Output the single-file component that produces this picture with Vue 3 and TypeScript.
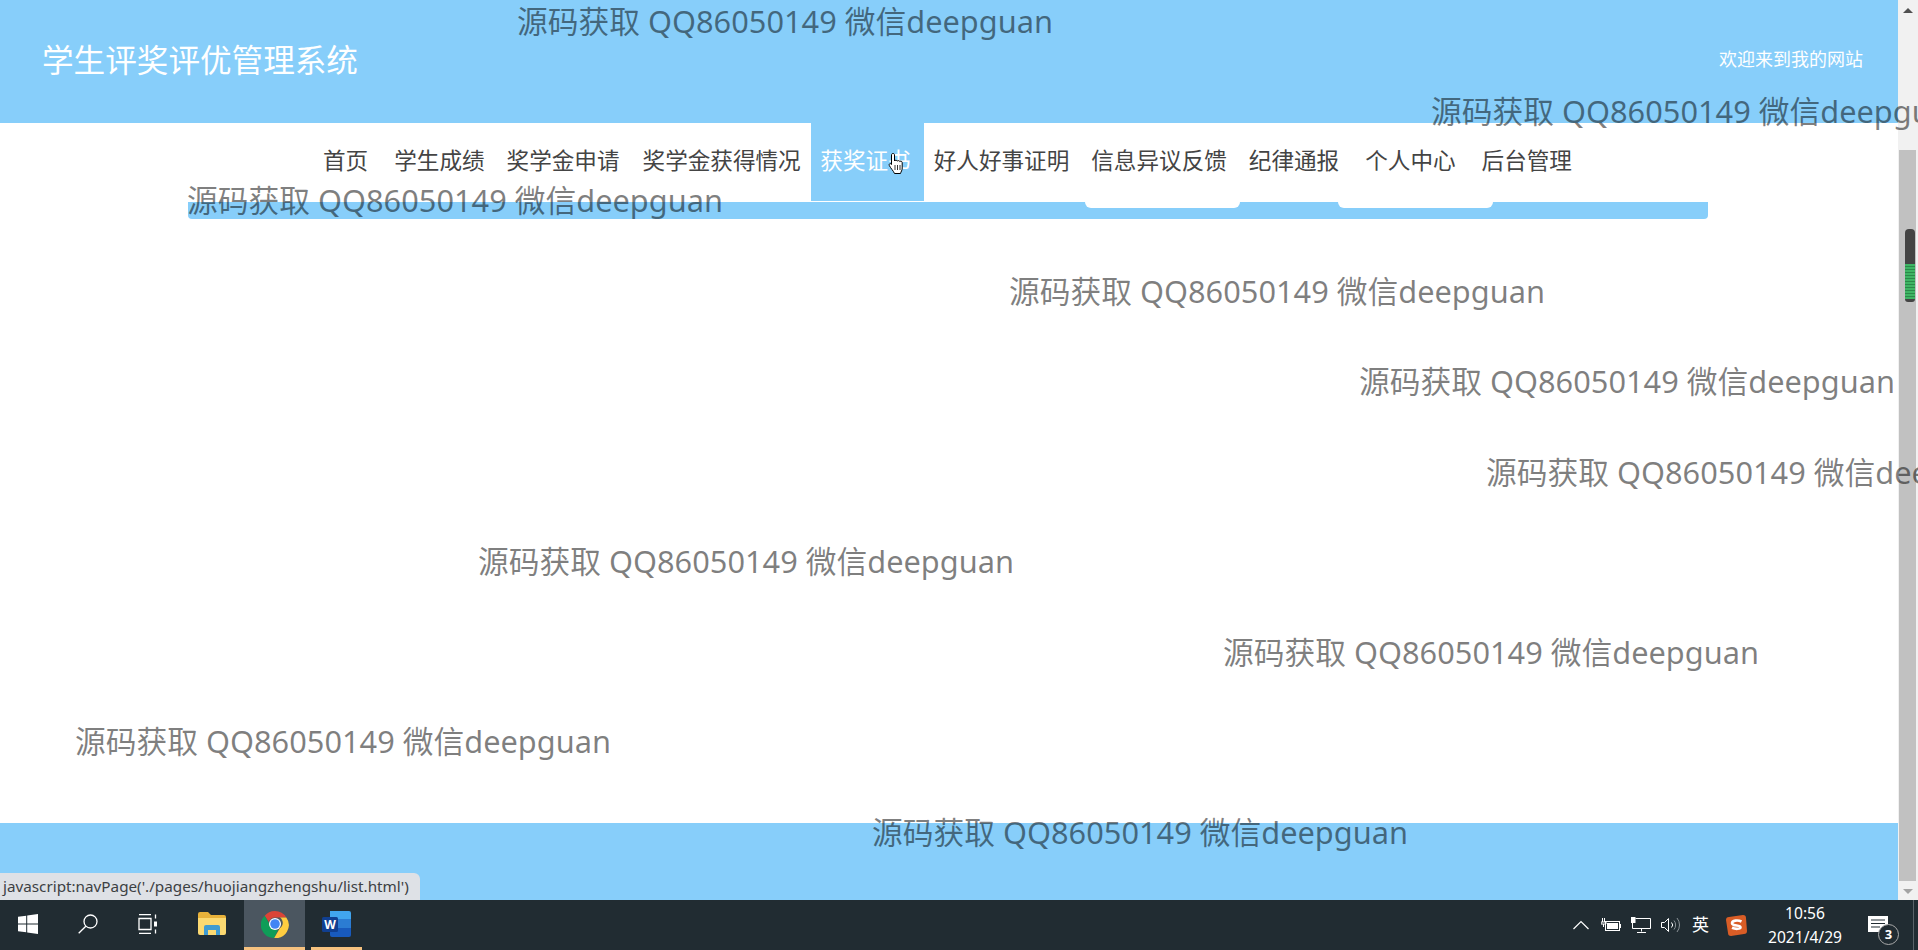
<script setup lang="ts">
const navItems = [
  '首页',
  '学生成绩',
  '奖学金申请',
  '奖学金获得情况',
  '获奖证书',
  '好人好事证明',
  '信息异议反馈',
  '纪律通报',
  '个人中心',
  '后台管理',
]

// 水印位置
const marks = [
  { x: 517, y: -1 },
  { x: 1431, y: 89 },
  { x: 187, y: 178 },
  { x: 1009, y: 269 },
  { x: 1359, y: 359 },
  { x: 1486, y: 450 },
  { x: 478, y: 539 },
  { x: 1223, y: 630 },
  { x: 75, y: 719 },
  { x: 872, y: 810 },
]
</script>

<template>
  <div class="screen">
    <div class="browser">
      <div class="page">
        <header class="header">
          <h1 class="title">学生评奖评优管理系统</h1>
          <span class="welcome">欢迎来到我的网站</span>
        </header>
        <nav class="nav">
          <a v-for="item in navItems" :key="item" class="nav-item" :class="{ active: item === '获奖证书' }">{{ item }}</a>
        </nav>
        <div class="bar">
          <span class="tab"></span>
          <span class="tab"></span>
        </div>
        <main class="content"></main>
        <footer class="footer"></footer>
      </div>
      <div class="scrollbar">
        <span class="arrow up"></span>
        <div class="thumb">
          <div class="battery"><span class="level"></span></div>
        </div>
        <span class="arrow down"></span>
      </div>
    </div>

    <div class="taskbar">
      <div class="task-left">
        <span class="task-btn win">
          <svg width="20" height="20" viewBox="0 0 20 20" fill="#fff"><path d="M0 2.8 8.2 1.7v7.8H0zM9.2 1.5 20 0v9.5H9.2zM0 10.5h8.2v7.8L0 17.2zM9.2 10.5H20V20L9.2 18.5z" /></svg>
        </span>
        <span class="task-btn">
          <svg width="20" height="20" viewBox="0 0 20 20" fill="none" stroke="#fff" stroke-width="1.3"><circle cx="12.5" cy="7.5" r="6.5" /><path d="M7.8 12.2 .7 19.3" /></svg>
        </span>
        <span class="task-btn">
          <svg width="20" height="20" viewBox="0 0 20 20" fill="none" stroke="#fff" stroke-width="1.3"><path d="M1 4.5h12v11H1zM1 .7h12M1 19.3h12" /><path d="M17.5 .5v4M17.5 15.5v4" /><rect x="16" y="7.5" width="3" height="5" fill="#fff" stroke="none" /></svg>
        </span>
        <span class="task-btn explorer">
          <svg width="28" height="24" viewBox="0 0 28 24"><path d="M0 2a2 2 0 0 1 2-2h8l3 3h13a2 2 0 0 1 2 2v4H0z" fill="#e8b23a" /><path d="M0 6h28v15a2 2 0 0 1-2 2H2a2 2 0 0 1-2-2z" fill="#fbd971" /><path d="M6 15a2 2 0 0 1 2-2h12a2 2 0 0 1 2 2v8h-4v-5H10v5H6z" fill="#3f9bd1" /></svg>
        </span>
        <span class="task-btn current">
          <svg width="28" height="28" viewBox="0 0 28 28">
            <path d="M14 1a13 13 0 0 1 11.3 6.5H14a6.500 6.500 0 0 0-6.200 4.500L3.700 5.800A13 13 0 0 1 14 1z" fill="#db4437" />
            <path d="M3.700 5.800 9.300 15.500a6.500 6.500 0 0 0 7.700 4.300l-3.800 8.200A13 13 0 0 1 3.700 5.800z" fill="#0f9d58" />
            <path d="M25.300 7.500A13 13 0 0 1 13.200 28l5.600-9.700A6.500 6.500 0 0 0 19 7.500z" fill="#ffcd40" />
            <circle cx="14" cy="14" r="6" fill="#fff" />
            <circle cx="14" cy="14" r="4.800" fill="#4285f4" />
          </svg>
        </span>
        <span class="task-btn word">
          <svg width="30" height="28" viewBox="0 0 30 28">
            <path d="M8 1h19a2 2 0 0 1 2 2v6H8z" fill="#41a5ee" />
            <path d="M8 9h21v9H8z" fill="#2b7cd3" />
            <path d="M8 18h21v7a2 2 0 0 1-2 2H10a2 2 0 0 1-2-2z" fill="#185abd" />
            <rect x="0" y="7" width="16" height="15" rx="1.500" fill="#103f91" />
            <text x="8" y="18.500" class="word-w">W</text>
          </svg>
        </span>
      </div>

      <div class="tray">
        <svg class="tray-icon caret" width="16" height="10" viewBox="0 0 16 10" fill="none" stroke="#fff" stroke-width="1.200"><path d="M.5 9 8 1.500 15.500 9" /></svg>
        <svg class="tray-icon power" width="20" height="14" viewBox="0 0 20 14" fill="none" stroke="#fff"><rect x="4.500" y="3.500" width="14" height="9" /><rect x="6" y="5" width="11" height="6" fill="#fff" stroke="none" /><path d="M19.500 6v4M1.500 0v4M3.500 0v4M0 4h5v2H0zM2.500 6v3" /></svg>
        <svg class="tray-icon network" width="20" height="16" viewBox="0 0 20 16" fill="none" stroke="#fff"><path d="M4.500 1.500H19.500V11.500H1.500V6" /><path d="M10.500 11.500v3M6 15.500h9" /><rect x=".5" y=".5" width="3.500" height="5" fill="#fff" /></svg>
        <svg class="tray-icon volume" width="20" height="16" viewBox="0 0 20 16" fill="none" stroke="#fff"><path d="M.5 5.500h3L7.500 1.500v13l-4-4h-3z" /><path d="M10.500 5.500a3.500 3.500 0 0 1 0 5" /><path d="M13 3.500a7 7 0 0 1 0 9M16 1a11 11 0 0 1 0 14" stroke="#8b9297" /></svg>
        <span class="ime">英</span>
        <svg class="tray-icon sogou" width="21" height="21" viewBox="0 0 21 21"><path d="M3 2 17 0a3 3 0 0 1 3 3l1 13a3 3 0 0 1-3 3L5 21a3 3 0 0 1-3-3L0 5a3 3 0 0 1 3-3z" fill="#d95d26" /><path d="M15.500 6.500C12 4.800 6 5.200 6 8.200c0 3.300 8.500 1.500 8.500 4.100 0 1.900-5 2-8.500.5" fill="none" stroke="#fff" stroke-width="2.600" /></svg>
        <div class="clock">
          <span>10:56</span>
          <span>2021/4/29</span>
        </div>
        <div class="notice">
          <svg width="20" height="18" viewBox="0 0 20 18"><path d="M0 0h20v16H0z" fill="#fff" /><path d="M3 4h14M3 7.500h14M3 11h9" stroke="#212c32" stroke-width="1.200" /></svg>
          <span class="badge">3</span>
        </div>
        <span class="desktop-line"></span>
      </div>
    </div>

    <!-- 水印 -->
    <span v-for="m in marks" :key="m.x" class="mark" :style="{ left: m.x + 'px', top: m.y + 'px' }">源码获取 QQ86050149 微信deepguan</span>

    <!-- 状态栏 -->
    <div class="status">javascript:navPage('./pages/huojiangzhengshu/list.html')</div>

    <!-- 鼠标 -->
    <svg class="cursor" width="17" height="23" viewBox="0 0 17 23">
      <path d="M5 1.500c1 0 1.500.6 1.500 1.500v6c.3-1 2.500-1 2.700.2.400-.9 2.400-.8 2.600.4.500-.7 2.400-.5 2.400 1V16c0 2.500-1.200 3.500-1.700 5.500H6.500C5.500 19 2.500 16 1.300 13.500c-.7-1.500.9-2.600 2.200-1.200l0 .2V3c0-.9.500-1.500 1.500-1.500z" fill="#fff" stroke="#000" />
      <path d="M7 13v5M9.500 13v5M12 13v5" stroke="#000" stroke-width=".8" />
    </svg>
  </div>
</template>

<style>
html,
body {
  margin: 0;
  overflow: hidden;
}
</style>

<style scoped>
.screen {
  position: relative;
  display: flex;
  flex-direction: column;
  width: 1918px;
  height: 950px;
  overflow: hidden;
  font-family: "Noto Sans", "Noto Sans CJK SC", sans-serif;
  background: #fff;
}

.browser {
  flex: 1;
  display: flex;
  min-height: 0;
}

.page {
  flex: 1;
  display: flex;
  flex-direction: column;
  min-width: 0;
}

.header {
  height: 123px;
  display: flex;
  justify-content: space-between;
  flex-shrink: 0;
  padding: 0 35px 0 42px;
  background: #87cefa;
  color: #fff;
}

.title {
  margin: 37px 0 0;
  font-size: 31.6px;
  font-weight: 400;
  line-height: 46px;
}

.welcome {
  margin-top: 46px;
  font-size: 18px;
  line-height: 26px;
}

.nav {
  height: 78px;
  display: flex;
  justify-content: center;
  flex-shrink: 0;
  padding-right: 3px;
}

.nav-item {
  padding: 0 11px;
  font-size: 22.6px;
  line-height: 76px;
  color: #444;
  white-space: nowrap;
}

.nav-item:nth-child(1) {
  margin-right: 4px;
}

.nav-item:nth-child(3) {
  margin-right: 1px;
}

.nav-item:nth-child(8) {
  margin-right: 4px;
}

.nav-item:nth-child(9) {
  margin-right: 4px;
}

.nav-item.active {
  margin: 0 -1px 0 -0.4px;
  padding: 0 13px 0 9px;
  background: #87cefa;
  color: #fff;
}

.bar {
  height: 17px;
  margin: 1px 190px 0 188px;
  display: flex;
  align-items: flex-start;
  flex-shrink: 0;
  gap: 98px;
  padding-left: 897px;
  border-radius: 0 0 4px 4px;
  background: #87cefa;
}

.tab {
  width: 155px;
  height: 6px;
  border-radius: 0 0 6px 6px;
  background: #fff;
}

.content {
  flex: 1;
}

.footer {
  height: 77px;
  flex-shrink: 0;
  background: #87cefa;
}

.scrollbar {
  width: 20px;
  display: flex;
  flex-direction: column;
  align-items: center;
  flex-shrink: 0;
  background: #f1f1f1;
}

.arrow {
  width: 0;
  height: 0;
  flex-shrink: 0;
  border-left: 5px solid transparent;
  border-right: 5px solid transparent;
}

.arrow.up {
  margin: 8px 0 9px;
  border-bottom: 5px solid #505050;
}

.arrow.down {
  margin: 8px 0 6px;
  border-top: 5px solid #a3a3a3;
}

.thumb {
  flex: 1;
  align-self: stretch;
  margin: 128px 2px 0 1px;
  padding: 79px 1px 0 6px;
  background: #c1c1c1;
}

.battery {
  height: 73px;
  padding-top: 35px;
  box-sizing: border-box;
  border-radius: 4px 4px 3px 3px;
  background: #444;
}

.level {
  display: block;
  height: 35px;
  background: repeating-linear-gradient(#3fb565 0 2px, #2b8a4a 2px 3px);
}

.taskbar {
  height: 50px;
  flex-shrink: 0;
  display: flex;
  justify-content: space-between;
  background: #212c32;
  color: #fff;
}

.task-left {
  display: flex;
}

.task-btn {
  width: 60px;
  height: 47px;
  display: flex;
  align-items: center;
  justify-content: center;
  padding-bottom: 3px;
}

.task-btn.win {
  width: 56px;
  margin-right: 2px;
}

.task-btn.explorer {
  width: 64px;
  margin-left: 2px;
}

.task-btn.current {
  width: 61px;
  padding-bottom: 0;
  border-bottom: 3px solid #f6c27f;
  background: #4b5660;
}

.task-btn.word {
  width: 51px;
  margin-left: 6px;
  padding-bottom: 0;
  border-bottom: 3px solid #f6c27f;
}

.word-w {
  fill: #fff;
  font-size: 12px;
  font-weight: 700;
  text-anchor: middle;
}

.tray {
  position: relative;
  display: flex;
  align-items: center;
  width: 346px;
  padding-left: 1px;
  box-sizing: border-box;
}

.tray-icon {
  flex-shrink: 0;
}

.caret {
  margin-right: 12px;
}

.power,
.network {
  margin-right: 10px;
}

.volume {
  margin-right: 11px;
}

.ime {
  width: 17px;
  font-size: 17px;
  line-height: 24px;
  margin-right: 17px;
}

.clock {
  width: 76px;
  margin-left: 20px;
  display: flex;
  flex-direction: column;
  align-items: center;
  gap: 3px;
  font-size: 15.6px;
  line-height: 21px;
  white-space: nowrap;
}

.notice {
  position: relative;
  margin-left: 25px;
  line-height: 0;
}

.badge {
  position: absolute;
  left: 10px;
  top: 8px;
  width: 19px;
  height: 19px;
  border: 1px solid #aaa;
  border-radius: 50%;
  background: #212c32;
  font-size: 13px;
  font-weight: 700;
  line-height: 19px;
  text-align: center;
}

.desktop-line {
  position: absolute;
  right: 4px;
  top: 0;
  bottom: 0;
  width: 1px;
  background: #5a6268;
}

.mark {
  position: absolute;
  font-size: 30.75px;
  line-height: 44px;
  color: rgba(0, 0, 0, 0.5);
  white-space: nowrap;
  pointer-events: none;
}

.status {
  position: absolute;
  left: 0;
  bottom: 50px;
  height: 27px;
  width: 420px;
  box-sizing: border-box;
  padding-left: 3px;
  border-top-right-radius: 6px;
  background: #dee1e6;
  color: #3c4043;
  font-size: 15.25px;
  line-height: 27px;
  white-space: nowrap;
}

.cursor {
  position: absolute;
  left: 888px;
  top: 152px;
}
</style>
